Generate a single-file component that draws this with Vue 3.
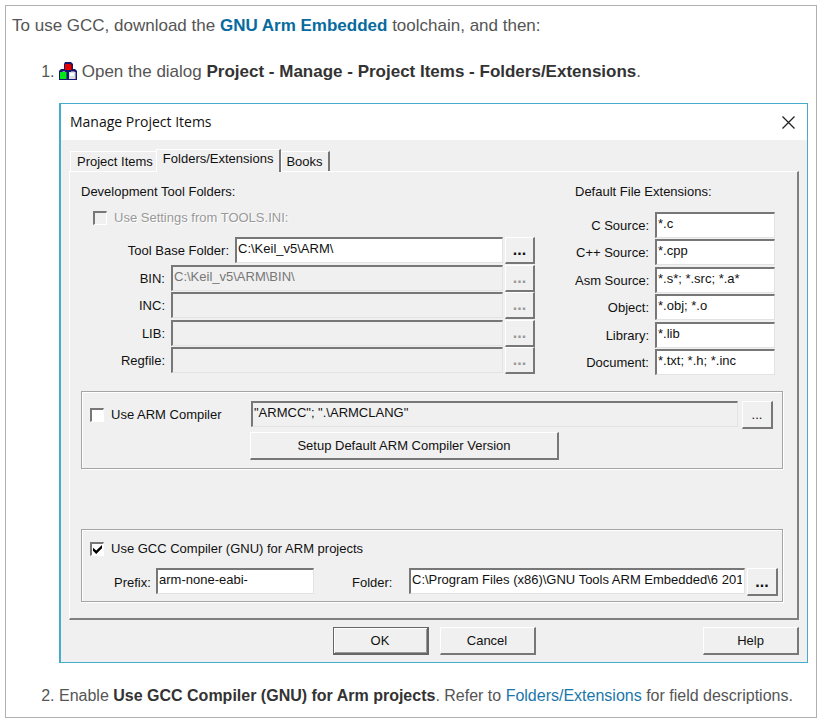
<script setup>
import { ref } from 'vue'

const folders = ref([
  { id: 'base', label: 'Tool Base Folder:', value: 'C:\\Keil_v5\\ARM\\', disabled: false },
  { id: 'bin', label: 'BIN:', value: 'C:\\Keil_v5\\ARM\\BIN\\', disabled: true },
  { id: 'inc', label: 'INC:', value: '', disabled: true },
  { id: 'lib', label: 'LIB:', value: '', disabled: true },
  { id: 'reg', label: 'Regfile:', value: '', disabled: true },
])

const extensions = ref([
  { id: 'c', label: 'C Source:', value: '*.c' },
  { id: 'cpp', label: 'C++ Source:', value: '*.cpp' },
  { id: 'asm', label: 'Asm Source:', value: '*.s*; *.src; *.a*' },
  { id: 'obj', label: 'Object:', value: '*.obj; *.o' },
  { id: 'library', label: 'Library:', value: '*.lib' },
  { id: 'doc', label: 'Document:', value: '*.txt; *.h; *.inc' },
])

const useArm = ref(false)
const useGcc = ref(true)
const armPaths = ref('"ARMCC"; ".\\ARMCLANG"')
const prefix = ref('arm-none-eabi-')
const gccFolder = ref('C:\\Program Files (x86)\\GNU Tools ARM Embedded\\6 2017')
</script>

<template>
  <main class="box">
    <p class="lead">To use GCC, download the <a class="strong" href="#">GNU Arm Embedded</a> toolchain, and then:</p>
    <ol class="steps">
      <li>
        <p class="lead">
          <svg class="blocks" width="18" height="18" viewBox="0 0 18 18" aria-hidden="true">
            <path d="M6 0h6l2 2v5h2l2 2v9H0V9l2-2h3V2z" fill="#17176f" />
            <path d="M6 2h5l1 1v5H6z" fill="#e80000" />
            <path d="M12 2l1 1v5h-1z" fill="#8c0000" />
            <path d="M4 9h2v1H3zM12 9h3l1 1h-4z" fill="#8888b0" />
            <path d="M1 10h6v7H1z" fill="#00e818" />
            <path d="M7 10h1v7H7z" fill="#087a30" />
            <path d="M10 10h6v7h-6z" fill="#dcdce4" />
            <path d="M11 11h4v3h-4z" fill="#fff" />
            <path d="M16 10h1v7h-1z" fill="#8888a0" />
          </svg>
          Open the dialog <b>Project - Manage - Project Items - Folders/Extensions</b>.
        </p>

        <section class="dialog" aria-label="Manage Project Items">
          <header class="titlebar">
            <span>Manage Project Items</span>
            <button class="close" type="button" aria-label="Close">
              <svg width="13" height="13" viewBox="0 0 13 13"><path d="M.5 .5l12 12M12.500 .5l-12 12" stroke="#222" stroke-width="1.300" fill="none" /></svg>
            </button>
          </header>

          <div class="content">
            <nav class="tabs">
              <button class="tab" type="button">Project Items</button>
              <button class="tab active" type="button">Folders/Extensions</button>
              <button class="tab last" type="button">Books</button>
            </nav>

            <div class="page">
              <div class="columns">
                <div class="left">
                  <div class="heading">Development Tool Folders:</div>
                  <div class="rows">
                    <label class="check off"><input type="checkbox" disabled />Use Settings from TOOLS.INI:</label>
                    <div v-for="f in folders" :key="f.id" class="row">
                      <label :for="f.id" class="name" :class="{ wide: f.id === 'base' }">{{ f.label }}</label>
                      <input :id="f.id" v-model="f.value" class="field" type="text" :disabled="f.disabled" />
                      <button class="btn dots" :class="{ bold: !f.disabled }" type="button" :disabled="f.disabled">...</button>
                    </div>
                  </div>
                </div>
                <div class="right">
                  <div class="heading">Default File Extensions:</div>
                  <div class="rows ext">
                    <div v-for="e in extensions" :key="e.id" class="row">
                      <label :for="e.id" class="name">{{ e.label }}</label>
                      <input :id="e.id" v-model="e.value" class="field" type="text" />
                    </div>
                  </div>
                </div>
              </div>

              <div class="group arm">
                <label class="check"><input v-model="useArm" type="checkbox" />Use ARM Compiler</label>
                <div class="armpath">
                  <input v-model="armPaths" class="field readonly" type="text" readonly aria-label="ARM Compiler folders" />
                  <button class="btn dots" type="button">...</button>
                </div>
                <button class="btn setup" type="button">Setup Default ARM Compiler Version</button>
              </div>

              <div class="group gcc">
                <label class="check"><input v-model="useGcc" type="checkbox" />Use GCC Compiler (GNU) for ARM projects</label>
                <div class="gccrow">
                  <label for="prefix">Prefix:</label>
                  <input id="prefix" v-model="prefix" class="field prefix" type="text" />
                  <label for="folder" class="folder">Folder:</label>
                  <input id="folder" v-model="gccFolder" class="field" type="text" />
                  <button class="btn dots bold" type="button">...</button>
                </div>
              </div>
            </div>

            <footer class="actions">
              <span></span>
              <div class="pair">
                <button class="btn action default" type="button">OK</button>
                <button class="btn action" type="button">Cancel</button>
              </div>
              <button class="btn action help" type="button">Help</button>
            </footer>
          </div>
        </section>
      </li>
      <li>
        <p>Enable <b>Use GCC Compiler (GNU) for Arm projects</b>. Refer to <a href="#">Folders/Extensions</a> for field descriptions.</p>
      </li>
    </ol>
  </main>
</template>

<style>
body {
  margin: 0;
  background: #fff;
}
</style>

<style scoped>
* {
  box-sizing: border-box;
}
.box {
  margin: 5px 6px 5px 5px;
  border: 1px solid #b0b0b0;
  padding: 8px 8px 9px 6px;
  font: 16px/24px "Liberation Sans", Arial, sans-serif;
  color: #555;
}
p {
  margin: 0;
}
.lead {
  font-size: 17px;
}
a {
  color: #1a77aa;
  text-decoration: none;
}
.strong {
  font-weight: bold;
  color: #066b9e;
}
b {
  color: #333;
}
.steps {
  margin: 22px 0 0;
  padding-left: 47px;
}
.blocks {
  vertical-align: -3px;
}
.dialog {
  margin: 19px 0 21px;
  border: solid #45accb;
  border-width: 1px 1px 1px 2px;
  background: #f0f0f0;
  color: #111;
  font-size: 13px;
  line-height: 16px;
}
.titlebar {
  display: flex;
  justify-content: space-between;
  align-items: center;
  height: 36px;
  padding: 0 12px 0 9px;
  background: #fff;
  font-family: "Open Sans", "Noto Sans", sans-serif;
  font-size: 14px;
}
button {
  margin: 0;
  padding: 0;
  border: 0;
  background: none;
  font: inherit;
  color: inherit;
}
.close {
  display: flex;
}
.content {
  padding: 9px 8px 7px;
}
.tabs {
  display: flex;
  align-items: flex-end;
  height: 22px;
  padding-left: 1px;
}
.tab {
  height: 20px;
  padding: 0 3px 0 6px;
  border-top: 1px solid #fff;
  border-left: 1px solid #fff;
}
.tab.active {
  height: 23px;
  padding: 0 6px 4px 6px;
  margin-bottom: -1px;
  position: relative;
  background: #f0f0f0;
  border-right: 2px solid #777;
}
.tab.last {
  padding: 0 5px 0 4px;
  border-right: 2px solid #777;
}
.page {
  border: 1px solid #fff;
  border-right: 2px solid #808080;
  border-bottom: 2px solid #808080;
  padding: 12px 14px 16px 11px;
}
.columns {
  display: flex;
  gap: 40px;
  padding-right: 8px;
}
.left {
  flex: 1;
}
.right {
  width: 200px;
}
.rows {
  display: grid;
  grid-template-columns: minmax(0, 1fr);
  grid-template-rows: repeat(3, 27px 28px);
  align-content: start;
  padding-top: 10px;
}
.rows.ext {
  padding-top: 12px;
}
.row {
  display: flex;
  align-items: flex-start;
}
.row .name {
  flex: none;
  width: 84px;
  margin-right: 6px;
  padding-top: 6px;
  text-align: right;
  white-space: nowrap;
}
.row .name.wide {
  width: 148px;
}
.ext .row .name {
  width: 74px;
}
.field {
  flex: 1;
  min-width: 0;
  height: 26px;
  margin: 0;
  padding: 0 2px 5px 1px;
  border: solid;
  border-width: 2px 1px 1px 2px;
  border-color: #777 #e3e3e3 #e3e3e3 #777;
  border-radius: 0;
  outline: 0;
  background: #fff;
  color: #111;
  font: inherit;
}
.field:disabled,
.field.readonly {
  background: #f0f0f0;
}
.field:disabled {
  color: #777;
}
.btn {
  height: 28px;
  border: solid;
  border-width: 1px 2px 2px 1px;
  border-color: #fff #777 #777 #fff;
  background: #f0f0f0;
}
.dots {
  width: 31px;
  margin-left: 2px;
}
.row .dots {
  height: 27px;
  width: 30px;
}
.bold,
.dots:disabled {
  font-weight: bold;
  font-size: 16px;
}
.dots:disabled {
  color: #999;
}
.check {
  display: flex;
  align-items: center;
  height: 16px;
}
.check input {
  appearance: none;
  width: 14px;
  height: 14px;
  margin: 0 7px 0 0;
  border: solid;
  border-width: 2px 1px 1px 2px;
  border-color: #777 #fff #fff #777;
  background: #fff;
}
.check input:checked::after {
  content: "";
  display: block;
  width: 9px;
  height: 9px;
  margin: 1px;
  background: #000;
  clip-path: polygon(0 30%, 36% 60%, 100% 0, 100% 35%, 36% 100%, 0 65%);
}
.check.off {
  padding-left: 12px;
  color: #999;
  text-shadow: 1px 1px #fff;
}
.check.off input {
  background: #f0f0f0;
}
.group {
  border: 1px solid #a5a5a5;
  box-shadow: 1px 1px #fff, inset 1px 1px #fff;
}
.arm {
  display: grid;
  grid-template-columns: 160px 1fr;
  row-gap: 3px;
  margin-top: 14px;
  padding: 9px 9px 8px 8px;
}
.arm .check {
  margin-top: 6px;
}
.armpath {
  display: flex;
  padding-left: 1px;
}
.armpath .dots {
  margin-left: 4px;
}
.setup {
  grid-column: 2;
  justify-self: start;
  width: 309px;
}
.gcc {
  margin-top: 60px;
  padding: 11px 4px 5px 8px;
}
.gccrow {
  display: flex;
  align-items: flex-start;
  margin-top: 11px;
  padding-left: 24px;
}
.gccrow label {
  width: 42px;
  padding-top: 7px;
}
.gccrow .prefix {
  flex: none;
  width: 158px;
}
.gccrow .folder {
  width: 57px;
  margin-left: 38px;
}
.actions {
  display: grid;
  grid-template-columns: 1fr auto 1fr;
  padding-top: 7px;
}
.pair {
  display: flex;
  gap: 11px;
}
.action {
  width: 96px;
}
.default {
  border-color: #666;
  box-shadow: inset 1px 1px #fff, inset -1px -1px #999;
}
.help {
  justify-self: end;
}
</style>
